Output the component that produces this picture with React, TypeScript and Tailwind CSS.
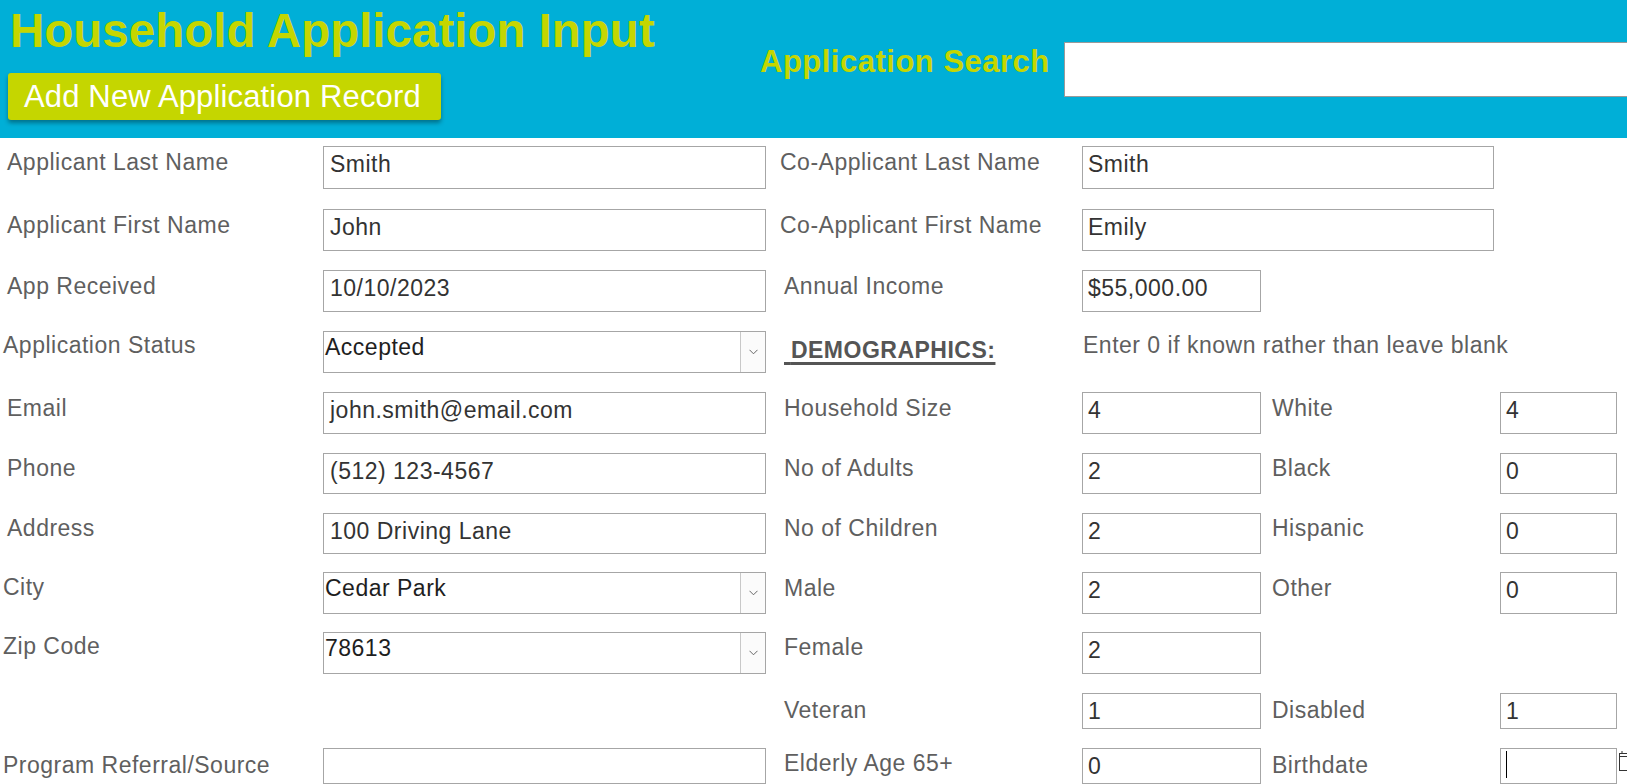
import React from "react";

const LABEL =
  "text-[23px] leading-[26px] tracking-[0.5px] text-[#5f5f5f] whitespace-nowrap";
const VALUE =
  "text-[23px] leading-[26px] tracking-[0.5px] text-[#333333] whitespace-nowrap";

function Label({ text, className }: { text: string; className: string }) {
  return <div className={`${LABEL} ${className}`}>{text}</div>;
}

function Box({
  value,
  className,
  pad = "pl-[6px]",
}: {
  value?: string;
  className: string;
  pad?: string;
}) {
  return (
    <div
      className={`shrink-0 border border-[#a6a6a6] bg-white pt-[4px] ${pad} ${className}`}
    >
      <div className={VALUE}>{value}</div>
    </div>
  );
}

function SelectBox({ value }: { value: string }) {
  return (
    <div className="flex h-[42px] w-[443px] shrink-0 border border-[#a6a6a6] bg-white">
      <div className="flex-1 pl-[1px] pt-[2px]">
        <div className="text-[23px] leading-[26px] tracking-[0.5px] text-[#1e1e1e] whitespace-nowrap">
          {value}
        </div>
      </div>
      <div className="flex w-[25px] items-center justify-center border-l border-[#c8c8c8] bg-[#fbfbfb]">
        <svg width="9" height="6" viewBox="0 0 9 6" fill="none">
          <path d="M0.5 0.8 L4.5 4.8 L8.5 0.8" stroke="#666" strokeWidth="1" />
        </svg>
      </div>
    </div>
  );
}

export default function App() {
  return (
    <div className="h-[784px] w-[1627px] overflow-hidden bg-white font-['Liberation_Sans',Arial,sans-serif]">
      {/* Header */}
      <header className="flex h-[138px] bg-[#00afd7]">
        <div className="w-[760px] shrink-0 pl-[8px] pt-[3px]">
          <h1 className="ml-[2px] text-[47.5px] font-bold leading-[56px] text-[#c5d600] whitespace-nowrap">
            Household Application Input
          </h1>
          <button className="mt-[14px] h-[47px] w-[433px] rounded-[3px] bg-[#c5d600] pl-[16px] text-left text-[31px] leading-[47px] tracking-[0.15px] text-white shadow-[0_3px_4px_rgba(0,0,0,0.35)] whitespace-nowrap">
            Add New Application Record
          </button>
        </div>
        <div className="flex items-start">
          <div className="mt-[44px] text-[31px] font-bold leading-[36px] tracking-[0.5px] text-[#c5d600] whitespace-nowrap">
            Application Search
          </div>
          <div className="ml-[14px] mt-[42px] h-[55px] w-[620px] shrink-0 border border-[#9a9a9a] bg-white" />
        </div>
      </header>

      {/* Form */}
      <div className="flex flex-col pt-[8px]">
        {/* Row 1 */}
        <div className="flex h-[63px]">
          <div className="w-[323px] shrink-0 pl-[7px] pt-[3px]">
            <Label text="Applicant Last Name" className="" />
          </div>
          <Box value="Smith" className="h-[43px] w-[443px]" />
          <div className="w-[316px] shrink-0 pl-[14px] pt-[3px]">
            <Label text="Co-Applicant Last Name" className="" />
          </div>
          <Box value="Smith" className="h-[43px] w-[412px]" pad="pl-[5px]" />
        </div>

        {/* Row 2 */}
        <div className="flex h-[61px]">
          <div className="w-[323px] shrink-0 pl-[7px] pt-[3px]">
            <Label text="Applicant First Name" className="" />
          </div>
          <Box value="John" className="h-[42px] w-[443px]" />
          <div className="w-[316px] shrink-0 pl-[14px] pt-[3px]">
            <Label text="Co-Applicant First Name" className="" />
          </div>
          <Box value="Emily" className="h-[42px] w-[412px]" pad="pl-[5px]" />
        </div>

        {/* Row 3 */}
        <div className="flex h-[61px]">
          <div className="w-[323px] shrink-0 pl-[7px] pt-[3px]">
            <Label text="App Received" className="" />
          </div>
          <Box value="10/10/2023" className="h-[42px] w-[443px]" />
          <div className="w-[316px] shrink-0 pl-[18px] pt-[3px]">
            <Label text="Annual Income" className="" />
          </div>
          <Box value="$55,000.00" className="h-[42px] w-[179px]" pad="pl-[5px]" />
        </div>

        {/* Row 4 */}
        <div className="flex h-[61px]">
          <div className="w-[323px] shrink-0 pl-[3px] pt-[1px]">
            <Label text="Application Status" className="" />
          </div>
          <SelectBox value="Accepted" />
          <div className="w-[316px] shrink-0 pl-[18px] pt-[6px]">
            <div className="text-[23px] font-bold leading-[26px] tracking-[0.5px] text-[#555555] whitespace-nowrap">
              <span className="underline decoration-[3px] underline-offset-[4px]">
                {"\u00a0"}DEMOGRAPHICS:
              </span>
            </div>
          </div>
          <div className="pl-[1px] pt-[1px]">
            <Label
              text="Enter 0 if known rather than leave blank"
              className=""
            />
          </div>
        </div>

        {/* Row 5 */}
        <div className="flex h-[61px]">
          <div className="w-[323px] shrink-0 pl-[7px] pt-[3px]">
            <Label text="Email" className="" />
          </div>
          <Box value="john.smith@email.com" className="h-[42px] w-[443px]" />
          <div className="w-[316px] shrink-0 pl-[18px] pt-[3px]">
            <Label text="Household Size" className="" />
          </div>
          <Box value="4" className="h-[42px] w-[179px]" pad="pl-[5px]" />
          <div className="w-[239px] shrink-0 pl-[11px] pt-[3px]">
            <Label text="White" className="" />
          </div>
          <Box value="4" className="h-[42px] w-[117px]" pad="pl-[5px]" />
        </div>

        {/* Row 6 */}
        <div className="flex h-[60px]">
          <div className="w-[323px] shrink-0 pl-[7px] pt-[2px]">
            <Label text="Phone" className="" />
          </div>
          <Box value="(512) 123-4567" className="h-[41px] w-[443px]" />
          <div className="w-[316px] shrink-0 pl-[18px] pt-[2px]">
            <Label text="No of Adults" className="" />
          </div>
          <Box value="2" className="h-[41px] w-[179px]" pad="pl-[5px]" />
          <div className="w-[239px] shrink-0 pl-[11px] pt-[2px]">
            <Label text="Black" className="" />
          </div>
          <Box value="0" className="h-[41px] w-[117px]" pad="pl-[5px]" />
        </div>

        {/* Row 7 */}
        <div className="flex h-[59px]">
          <div className="w-[323px] shrink-0 pl-[7px] pt-[2px]">
            <Label text="Address" className="" />
          </div>
          <Box value="100 Driving Lane" className="h-[41px] w-[443px]" />
          <div className="w-[316px] shrink-0 pl-[18px] pt-[2px]">
            <Label text="No of Children" className="" />
          </div>
          <Box value="2" className="h-[41px] w-[179px]" pad="pl-[5px]" />
          <div className="w-[239px] shrink-0 pl-[11px] pt-[2px]">
            <Label text="Hispanic" className="" />
          </div>
          <Box value="0" className="h-[41px] w-[117px]" pad="pl-[5px]" />
        </div>

        {/* Row 8 */}
        <div className="flex h-[60px]">
          <div className="w-[323px] shrink-0 pl-[3px] pt-[2px]">
            <Label text="City" className="" />
          </div>
          <SelectBox value="Cedar Park" />
          <div className="w-[316px] shrink-0 pl-[18px] pt-[3px]">
            <Label text="Male" className="" />
          </div>
          <Box value="2" className="h-[42px] w-[179px]" pad="pl-[5px]" />
          <div className="w-[239px] shrink-0 pl-[11px] pt-[3px]">
            <Label text="Other" className="" />
          </div>
          <Box value="0" className="h-[42px] w-[117px]" pad="pl-[5px]" />
        </div>

        {/* Row 9 */}
        <div className="flex h-[61px]">
          <div className="w-[323px] shrink-0 pl-[3px] pt-[1px]">
            <Label text="Zip Code" className="" />
          </div>
          <SelectBox value="78613" />
          <div className="w-[316px] shrink-0 pl-[18px] pt-[2px]">
            <Label text="Female" className="" />
          </div>
          <Box value="2" className="h-[42px] w-[179px]" pad="pl-[5px]" />
        </div>

        {/* Row 10 */}
        <div className="flex h-[55px]">
          <div className="w-[323px] shrink-0" />
          <div className="w-[443px] shrink-0" />
          <div className="w-[316px] shrink-0 pl-[18px] pt-[4px]">
            <Label text="Veteran" className="" />
          </div>
          <Box value="1" className="h-[36px] w-[179px]" pad="pl-[5px]" />
          <div className="w-[239px] shrink-0 pl-[11px] pt-[4px]">
            <Label text="Disabled" className="" />
          </div>
          <Box value="1" className="h-[36px] w-[117px]" pad="pl-[5px]" />
        </div>

        {/* Row 11 */}
        <div className="flex h-[36px]">
          <div className="w-[323px] shrink-0 pl-[3px] pt-[4px]">
            <Label text="Program Referral/Source" className="" />
          </div>
          <Box value="" className="h-[36px] w-[443px]" />
          <div className="w-[316px] shrink-0 pl-[18px] pt-[2px]">
            <Label text="Elderly Age 65+" className="" />
          </div>
          <Box value="0" className="h-[36px] w-[179px]" pad="pl-[5px]" />
          <div className="w-[239px] shrink-0 pl-[11px] pt-[4px]">
            <Label text="Birthdate" className="" />
          </div>
          <div className="flex h-[36px] w-[117px] shrink-0 items-start border border-[#a6a6a6] bg-white">
            <div className="ml-[5px] mt-[2px] h-[27px] w-px bg-black" />
          </div>
          <svg
            className="ml-[2px] mt-[2px] shrink-0"
            width="12"
            height="22"
            viewBox="0 0 12 22"
            fill="none"
          >
            <rect x="0.5" y="3.5" width="11" height="17" stroke="#333" />
            <line x1="0.5" y1="6.5" x2="11.5" y2="6.5" stroke="#333" />
            <line x1="3" y1="1" x2="3" y2="4" stroke="#333" />
            <line x1="9" y1="1" x2="9" y2="4" stroke="#333" />
          </svg>
        </div>
      </div>
    </div>
  );
}
